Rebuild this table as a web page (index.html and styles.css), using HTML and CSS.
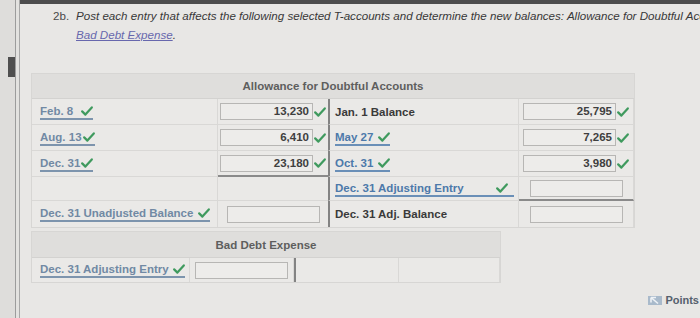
FILE: index.html
```html
<!DOCTYPE html>
<html lang="en">
<head>
    <meta charset="UTF-8">
    <meta name="viewport" content="width=device-width,initial-scale=1.0" />
    <title>2b. T-accounts</title>
    <link rel="stylesheet" href="styles.css">
</head>
<body>
    <div class="screen">
        <aside class="gutter"><span class="thumb"></span></aside>
        <div class="rail"></div>
        <div class="panel">
            <div class="prompt">
                <span class="num">2b.</span>
                <p class="ask">Post each entry that affects the following selected T-accounts and determine the new balances: Allowance for Doubtful Accounts and<br><a href="#">Bad Debt Expense</a>.</p>
            </div>

            <!-- Allowance for Doubtful Accounts -->
            <section class="tacct allowance">
                <div class="head">Allowance for Doubtful Accounts</div>

                <div class="cell name"><span class="entry">Feb. 8&nbsp; <svg class="ok" viewBox="0 0 12 10"><path d="M1.2 5.4 4.4 8.6 10.8 1.4"/></svg></span></div>
                <div class="cell amt dr"><span class="box">13,230</span><svg class="ok" viewBox="0 0 12 10"><path d="M1.2 5.4 4.4 8.6 10.8 1.4"/></svg></div>
                <div class="cell name cr"><span class="plain">Jan. 1 Balance</span></div>
                <div class="cell amt"><span class="box">25,795</span><svg class="ok" viewBox="0 0 12 10"><path d="M1.2 5.4 4.4 8.6 10.8 1.4"/></svg></div>

                <div class="cell name"><span class="entry">Aug. 13<svg class="ok" viewBox="0 0 12 10"><path d="M1.2 5.4 4.4 8.6 10.8 1.4"/></svg></span></div>
                <div class="cell amt dr"><span class="box">6,410</span><svg class="ok" viewBox="0 0 12 10"><path d="M1.2 5.4 4.4 8.6 10.8 1.4"/></svg></div>
                <div class="cell name cr"><span class="entry blue">May 27 <svg class="ok" viewBox="0 0 12 10"><path d="M1.2 5.4 4.4 8.6 10.8 1.4"/></svg></span></div>
                <div class="cell amt"><span class="box">7,265</span><svg class="ok" viewBox="0 0 12 10"><path d="M1.2 5.4 4.4 8.6 10.8 1.4"/></svg></div>

                <div class="cell name"><span class="entry">Dec. 31<svg class="ok" viewBox="0 0 12 10"><path d="M1.2 5.4 4.4 8.6 10.8 1.4"/></svg></span></div>
                <div class="cell amt dr total"><span class="box">23,180</span><svg class="ok" viewBox="0 0 12 10"><path d="M1.2 5.4 4.4 8.6 10.8 1.4"/></svg></div>
                <div class="cell name cr"><span class="entry blue">Oct. 31 <svg class="ok" viewBox="0 0 12 10"><path d="M1.2 5.4 4.4 8.6 10.8 1.4"/></svg></span></div>
                <div class="cell amt"><span class="box">3,980</span><svg class="ok" viewBox="0 0 12 10"><path d="M1.2 5.4 4.4 8.6 10.8 1.4"/></svg></div>

                <div class="cell name"></div>
                <div class="cell amt dr"></div>
                <div class="cell name cr"><span class="entry blue wide">Dec. 31 Adjusting Entry <svg class="ok" viewBox="0 0 12 10"><path d="M1.2 5.4 4.4 8.6 10.8 1.4"/></svg></span></div>
                <div class="cell amt total"><span class="box"></span></div>

                <div class="cell name"><span class="entry">Dec. 31 Unadjusted Balance <svg class="ok" viewBox="0 0 12 10"><path d="M1.2 5.4 4.4 8.6 10.8 1.4"/></svg></span></div>
                <div class="cell amt dr"><span class="box"></span></div>
                <div class="cell name cr"><span class="plain">Dec. 31 Adj. Balance</span></div>
                <div class="cell amt"><span class="box"></span></div>
            </section>

            <!-- Bad Debt Expense -->
            <section class="tacct expense">
                <div class="head">Bad Debt Expense</div>
                <div class="cell name"><span class="entry">Dec. 31 Adjusting Entry <svg class="ok" viewBox="0 0 12 10"><path d="M1.2 5.4 4.4 8.6 10.8 1.4"/></svg></span></div>
                <div class="cell amt"><span class="box"></span></div>
                <div class="cell name cr"></div>
                <div class="cell amt"></div>
            </section>

            <div class="foot">
                <span class="points"><svg class="pt-icon" viewBox="0 0 14 9"><rect width="14" height="9" fill="#a9bacb"/><path d="M3 1.5h5M3 1.5v5M3 1.5l7 6" stroke="#eef2f6" stroke-width="1.6" fill="none"/></svg>Points</span>
            </div>
        </div>
    </div>
</body>
</html>
```

FILE: styles.css
```css
html, body {
    margin: 0;
    padding: 0;
    background: #e6e5e3;
    overflow: hidden;
}
.screen {
    display: flex;
    height: 318px;
    font-family: "Liberation Sans", Arial, sans-serif;
    color: #3c3c3c;
}

/* left edge of the window */
.gutter {
    width: 15px;
    flex: none;
    background: #dedddb;
}
.thumb {
    display: block;
    width: 7px;
    height: 20px;
    margin: 57px 0 0 8px;
    background: #4f4f4f;
}
.rail {
    width: 3px;
    flex: none;
    background: #e3e2e0;
    border-left: 1px solid #9c9c9c;
    border-right: 1px solid #a8a8a8;
}
.panel {
    flex: 1;
    min-width: 0;
    border-top: 4px solid #4d4d4d;
    background: #e8e7e5;
    padding-left: 11px;
    overflow: hidden;
}

/* question text */
.prompt {
    display: flex;
    margin-top: 2px;
    padding-left: 22px;
    font-size: 11.6px;
    line-height: 19px;
    white-space: nowrap;
}
.prompt .num {
    width: 23px;
    flex: none;
    color: #4a4a4a;
}
.ask {
    margin: 0;
    font-style: italic;
    color: #383838;
}
.ask a {
    color: #6767ad;
    text-decoration: underline;
}

/* T-accounts */
.tacct {
    display: grid;
    background: #eae9e7;
    border: 1px solid #d7d6d4;
    font-size: 11.5px;
    font-weight: bold;
}
.allowance {
    width: 602px;
    margin-top: 29px;
    grid-template-columns: 186px 110px 191px 115px;
    grid-template-rows: 25px 26px 26px 26px 24px 26px;
}
.expense {
    width: 468px;
    margin-top: 3px;
    grid-template-columns: 158px 104px 105px 101px;
    grid-template-rows: 26px 24px;
}
.head {
    grid-column: 1 / -1;
    display: flex;
    align-items: center;
    justify-content: center;
    background: #dfdedc;
    color: #5e5e5e;
    border-bottom: 1px solid #d3d2d0;
}
.cell {
    display: flex;
    align-items: center;
    border-bottom: 1px solid #d9d8d6;
    border-right: 1px solid #d9d8d6;
}
.cell:nth-last-child(-n+4) {
    border-bottom: none;
}
.cell.name {
    padding-left: 8px;
}
.cell.cr {
    padding-left: 5px;
    border-left: 2px solid #838383;
}
.cell.amt {
    justify-content: center;
}
.cell.dr {
    border-right: none;
}
.cell.total {
    border-bottom: 2px solid #8a8a8a;
}

.entry {
    display: inline-flex;
    align-items: center;
    color: #7189a4;
    border-bottom: 2px solid #7d94ad;
    line-height: 14px;
    white-space: pre;
}
.entry.blue {
    color: #4d79aa;
    border-bottom-color: #6a8fb7;
}
.entry.wide {
    width: 179px;
    justify-content: space-between;
}
.entry.wide .ok {
    margin-right: 6px;
}
.plain {
    color: #3a3a3a;
}

.box {
    box-sizing: border-box;
    width: 93px;
    height: 17px;
    padding-right: 3px;
    border: 1px solid #b7b6b4;
    background: #edecea;
    color: #3f3f3f;
    text-align: right;
    line-height: 15px;
}
.ok {
    width: 12px;
    height: 10px;
    margin-left: 1px;
    flex: none;
    fill: none;
    stroke: #3f9a5e;
    stroke-width: 2.2;
    stroke-linecap: round;
    stroke-linejoin: round;
}

/* score line */
.foot {
    display: flex;
    justify-content: flex-end;
    margin-top: 10px;
    padding-right: 1px;
}
.points {
    display: inline-flex;
    align-items: center;
    gap: 3px;
    font-size: 11px;
    font-weight: bold;
    color: #55606d;
    line-height: 14px;
}
.pt-icon {
    width: 14px;
    height: 9px;
}
```
